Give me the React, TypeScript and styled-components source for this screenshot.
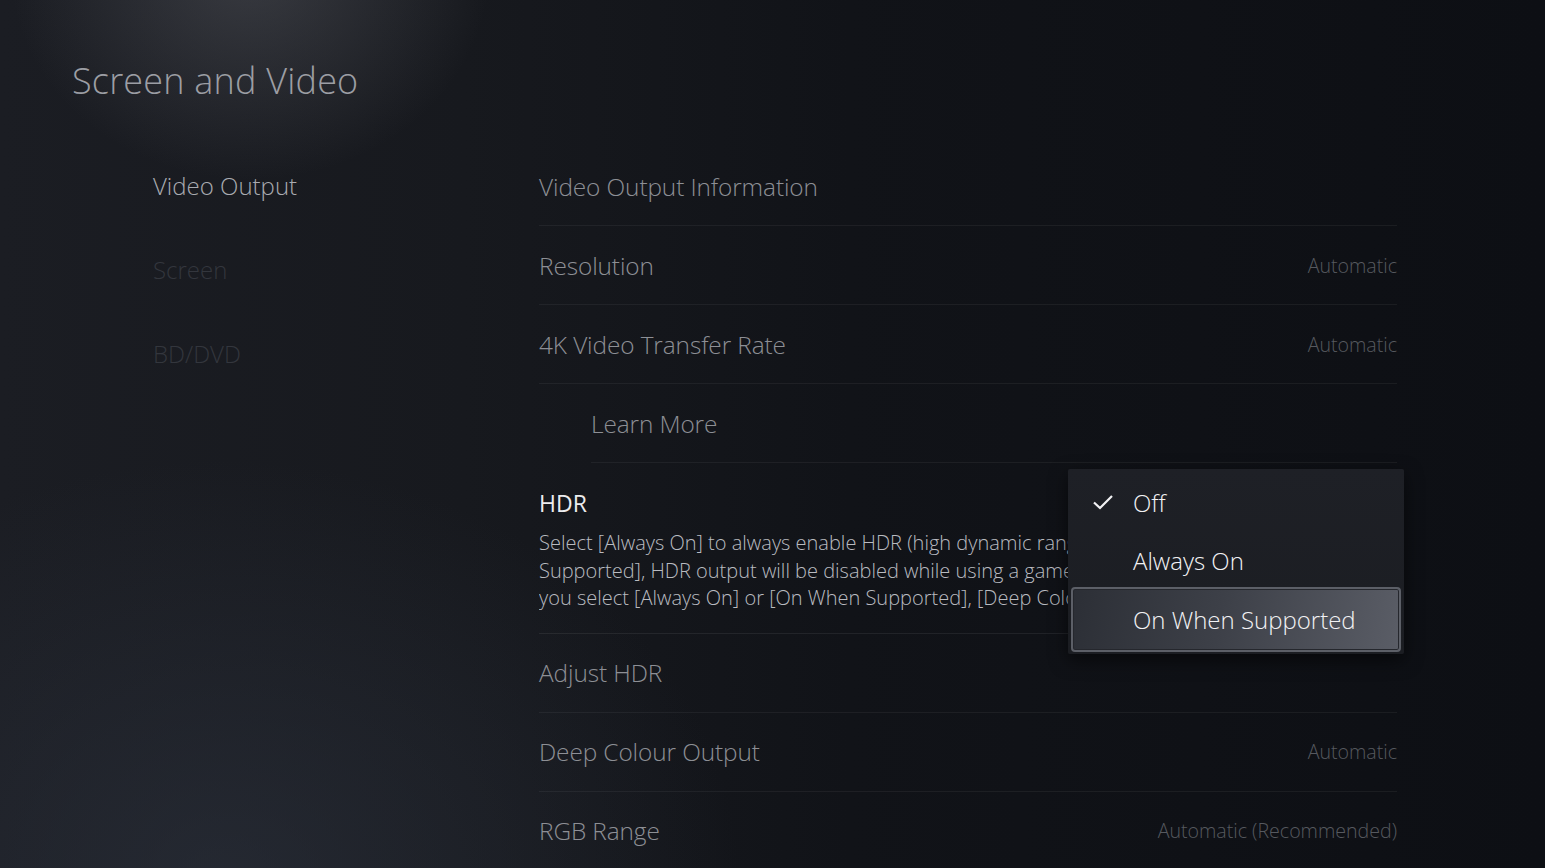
import React from 'react';
import styled, { createGlobalStyle } from 'styled-components';

const GlobalStyle = createGlobalStyle`
  html, body {
    margin: 0;
    padding: 0;
    height: 100%;
  }
  body {
    overflow: hidden;
    font-family: 'Open Sans', 'Noto Sans', sans-serif;
    background-color: #0e1015;
    background-image:
      radial-gradient(ellipse 240px 210px at 250px -30px, rgba(120, 122, 130, 0.33), rgba(120, 122, 130, 0) 100%),
      radial-gradient(ellipse 520px 420px at 220px 880px, rgba(46, 52, 64, 0.55), rgba(46, 52, 64, 0) 100%),
      linear-gradient(90deg, #1b1d23 0%, #17191e 30%, #111318 55%, #0d0f14 100%);
  }
`;

const Page = styled.div`
  width: 1545px;
  height: 868px;
  position: relative;
`;

const Title = styled.h1`
  margin: 0;
  padding: 58px 0 0 72px;
  font-size: 36px;
  font-weight: 300;
  line-height: 46px;
  color: #9c9ea4;
  letter-spacing: 0.2px;
`;

const Body = styled.div`
  display: grid;
  grid-template-columns: 386px 858px;
  padding: 43px 0 0 153px;
`;

const Nav = styled.nav`
  display: flex;
  flex-direction: column;
  gap: 50px;
  padding-top: 22px;
`;

const NavItem = styled.div<{ active?: boolean }>`
  font-size: 24px;
  font-weight: 300;
  line-height: 34px;
  color: ${({ active }) => (active ? '#a9abb1' : '#33363d')};
`;

const List = styled.div`
  display: flex;
  flex-direction: column;
  position: relative;
`;

const Row = styled.div<{ indent?: boolean }>`
  display: flex;
  align-items: center;
  justify-content: space-between;
  height: 79px;
  margin-left: ${({ indent }) => (indent ? '52px' : '0')};
  border-bottom: 1px solid rgba(255, 255, 255, 0.055);
  box-sizing: border-box;
  &:last-child {
    border-bottom: none;
  }
`;

const Label = styled.span`
  font-size: 24.4px;
  font-weight: 300;
  color: #8d8f95;
  letter-spacing: -0.1px;
`;

const Value = styled.span`
  font-size: 19.6px;
  font-weight: 300;
  color: #56595f;
`;

const Section = styled.div`
  padding: 24px 0 21px;
  border-bottom: 1px solid rgba(255, 255, 255, 0.07);
`;

const SectionTitle = styled.div`
  font-size: 23px;
  font-weight: 400;
  color: #ececee;
  line-height: 32px;
  margin-bottom: 10px;
`;

const Description = styled.div`
  width: 529px;
  overflow: hidden;
  font-size: 20px;
  font-weight: 300;
  line-height: 27.5px;
  color: #b9bbc0;
  white-space: nowrap;
`;

const Menu = styled.div`
  position: absolute;
  left: 529px;
  top: 322px;
  width: 336px;
  padding: 4px 3px 2px;
  box-sizing: border-box;
  background: linear-gradient(180deg, #1e2026 0%, #1b1d22 100%);
  box-shadow: 0 6px 18px rgba(0, 0, 0, 0.55);
  border-radius: 2px;
  display: flex;
  flex-direction: column;
`;

const Option = styled.div<{ selected?: boolean }>`
  position: relative;
  display: flex;
  align-items: center;
  height: ${({ selected }) => (selected ? '65px' : '58px')};
  margin-top: ${({ selected }) => (selected ? '-2px' : '0')};
  padding-left: 60px;
  box-sizing: border-box;
  font-size: 24px;
  font-weight: 300;
  color: #f2f2f4;
  border-radius: 4px;
  border: 2px solid ${({ selected }) => (selected ? '#5c5f67' : 'transparent')};
  background: ${({ selected }) =>
    selected ? 'linear-gradient(100deg, #2c2f36 0%, #3d4048 45%, #5a5d66 100%)' : 'transparent'};
  box-shadow: ${({ selected }) => (selected ? 'inset 0 0 0 1px #25272d' : 'none')};
`;

const Check = styled.svg`
  position: absolute;
  left: 19px;
  top: 50%;
  transform: translateY(-50%);
`;

const rows = [
  { label: 'Video Output Information' },
  { label: 'Resolution', value: 'Automatic' },
  { label: '4K Video Transfer Rate', value: 'Automatic' },
  { label: 'Learn More', indent: true },
];

const lowerRows = [
  { label: 'Adjust HDR' },
  { label: 'Deep Colour Output', value: 'Automatic' },
  { label: 'RGB Range', value: 'Automatic (Recommended)' },
];

const App: React.FC = () => {
  return (
    <Page>
      <GlobalStyle />
      <Title>Screen and Video</Title>
      <Body>
        <Nav>
          <NavItem active>Video Output</NavItem>
          <NavItem>Screen</NavItem>
          <NavItem>BD/DVD</NavItem>
        </Nav>
        <List>
          {rows.map((row) => (
            <Row key={row.label} indent={row.indent}>
              <Label>{row.label}</Label>
              {row.value && <Value>{row.value}</Value>}
            </Row>
          ))}
          <Section>
            <SectionTitle>HDR</SectionTitle>
            <Description>
              Select [Always On] to always enable HDR (high dynamic range) output. If you select [On When
              <br />
              Supported], HDR output will be disabled while using a game or app that doesn't support HDR.
              <br />
              you select [Always On] or [On When Supported], [Deep Colour Output] is set to [Automatic].
            </Description>
          </Section>
          {lowerRows.map((row) => (
            <Row key={row.label}>
              <Label>{row.label}</Label>
              {row.value && <Value>{row.value}</Value>}
            </Row>
          ))}
          <Menu>
            <Option>
              <Check width="22" height="16" viewBox="0 0 22 16">
                <path d="M2 8.5 L8 14 L20 2" fill="none" stroke="#f2f2f4" strokeWidth="2.2" />
              </Check>
              Off
            </Option>
            <Option>Always On</Option>
            <Option selected>On When Supported</Option>
          </Menu>
        </List>
      </Body>
    </Page>
  );
};

export default App;
